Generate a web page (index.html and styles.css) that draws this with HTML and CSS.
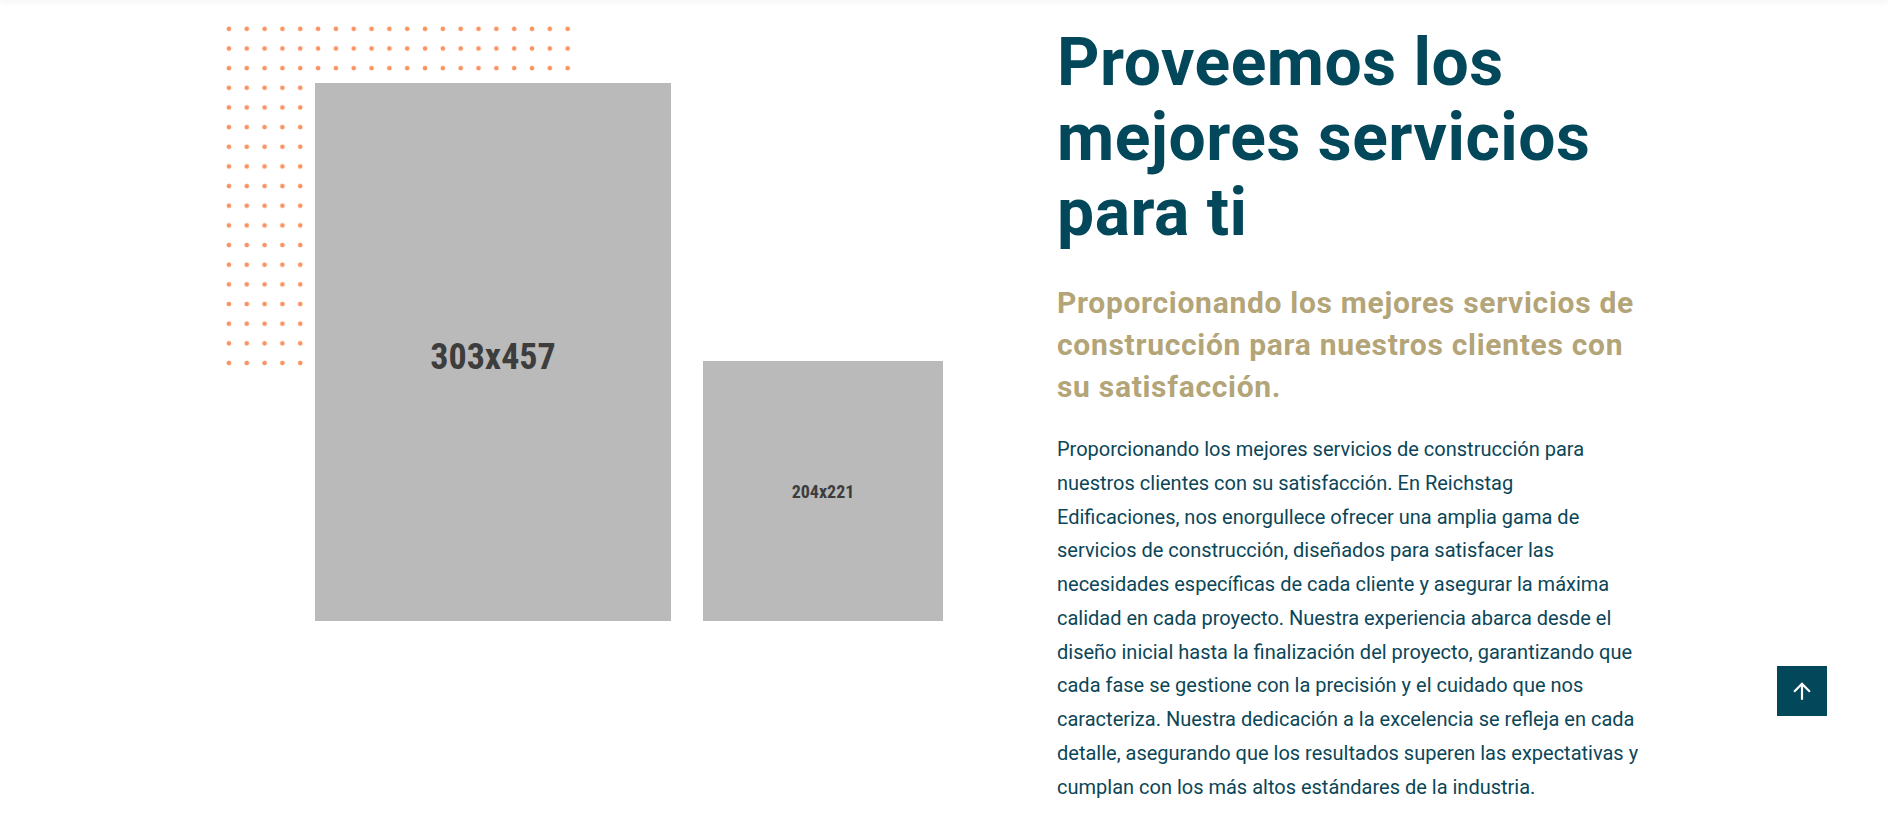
FILE: index.html
```html
<!DOCTYPE html>
<html lang="es">
<head>
<meta charset="utf-8">
<title>Proveemos los mejores servicios para ti</title>
<link rel="stylesheet" href="styles.css">
</head>
<body>
<div class="header-shadow"></div>
<section class="about">
  <div class="about-media">
    <div class="dots"></div>
    <div class="ph ph-large"><span>303x457</span></div>
    <div class="ph ph-small"><span>204x221</span></div>
  </div>
  <div class="about-content">
    <h2 class="title">Proveemos los mejores servicios para ti</h2>
    <h3 class="subtitle">Proporcionando los mejores servicios de construcción para nuestros clientes con su satisfacción.</h3>
    <p class="text">Proporcionando los mejores servicios de construcción para nuestros clientes con su satisfacción. En Reichstag<br>Edificaciones, nos enorgullece ofrecer una amplia gama de servicios de construcción, diseñados para satisfacer las necesidades específicas de cada cliente y asegurar la máxima calidad en cada proyecto. Nuestra experiencia abarca desde el diseño inicial hasta la finalización del proyecto, garantizando que cada fase se gestione con la precisión y el cuidado que nos caracteriza. Nuestra dedicación a la excelencia se refleja en cada detalle, asegurando que los resultados superen las expectativas y cumplan con los más altos estándares de la industria.</p>
  </div>
</section>
<a class="back-to-top" href="#" aria-label="Volver arriba">
  <svg width="26" height="26" viewBox="0 0 24 24" fill="#ffffff">
    <path d="M4 12l1.41 1.41L11 7.83V20h2V7.83l5.58 5.59L20 12l-8-8-8 8z"/>
  </svg>
</a>
</body>
</html>
```
FILE: styles.css
```css
html, body {
  margin: 0;
  padding: 0;
  background: #ffffff;
}

body {
  font-family: Roboto, "Liberation Sans", sans-serif;
  color: #0b4658;
  height: 825px;
  overflow: hidden;
  position: relative;
}

.header-shadow {
  height: 0;
  box-shadow: 0 0 6px 1px rgba(0, 0, 0, 0.12);
}

.about {
  display: flex;
  align-items: flex-start;
  padding-left: 220px;
}

.about-media {
  position: relative;
  display: flex;
  align-items: flex-end;
  gap: 32px;
  padding: 83px 0 0 95px;
  width: 628px;
  flex-shrink: 0;
}

.dots {
  position: absolute;
  left: 0;
  top: 19px;
  width: 357px;
  height: 354px;
  background-image: radial-gradient(circle, #fb915f 0, #fb915f 1.9px, rgba(251, 145, 95, 0) 2.7px);
  background-size: 17.83px 19.67px;
}

.ph {
  position: relative;
  background: #bababa;
  color: #3d3d3d;
  font-family: "Roboto Condensed", Roboto, sans-serif;
  font-weight: 700;
  display: flex;
  align-items: center;
  justify-content: center;
  flex-shrink: 0;
}

.ph-large {
  width: 356px;
  height: 528px;
  padding-top: 10px;
  font-size: 36px;
}

.ph-small {
  width: 240px;
  height: 260px;
  font-size: 18px;
}

.about-content {
  margin-left: 114px;
  width: 600px;
}

.title {
  margin: 25px 0 0;
  font-family: Roboto, sans-serif;
  font-weight: 700;
  font-size: 66px;
  line-height: 75px;
  letter-spacing: 0.5px;
  color: #03475a;
  width: 560px;
}

.subtitle {
  margin: 32px 0 0;
  font-family: Roboto, sans-serif;
  font-weight: 700;
  font-size: 30px;
  line-height: 42px;
  letter-spacing: 0.7px;
  color: #b3a577;
  width: 592px;
}

.text {
  margin: 25px 0 0;
  width: 590px;
  font-size: 20px;
  line-height: 33.75px;
  color: #0b4658;
}

.back-to-top {
  position: absolute;
  left: 1777px;
  top: 666px;
  width: 50px;
  height: 50px;
  background: #03475a;
  display: flex;
  align-items: center;
  justify-content: center;
}
```
